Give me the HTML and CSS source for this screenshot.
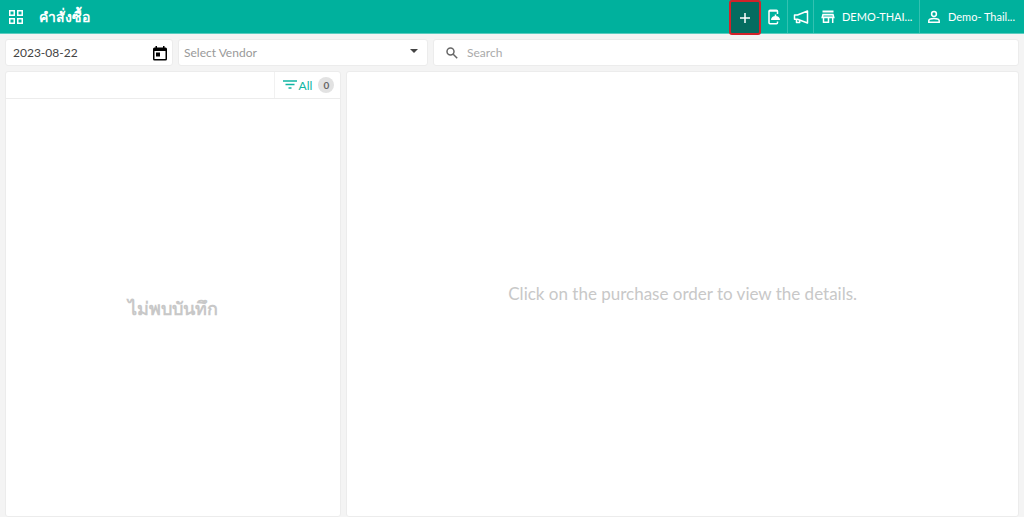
FILE: index.html
```
<!DOCTYPE html>
<html lang="th">
<head>
<meta charset="utf-8">
<meta name="viewport" content="width=device-width, initial-scale=1">
<title>คำสั่งซื้อ</title>
<link rel="stylesheet" href="styles.css">
</head>
<body>
  <header class="topbar">
    <button class="menubtn" type="button" aria-label="Menu">
      <svg width="16" height="16" viewBox="0 0 16 16" fill="none" stroke="currentColor" stroke-width="1.5">
        <path d="M1.75 1.75h4.5v4.5h-4.5zM9.75 1.75h4.5v4.5h-4.5zM1.75 9.75h4.5v4.5h-4.5zM9.75 9.75h4.5v4.5h-4.5z"/>
      </svg>
    </button>
    <h1 class="title">คำสั่งซื้อ</h1>
    <nav class="actions">
      <button class="action add" type="button" aria-label="Add order">
        <svg width="12" height="12" viewBox="0 0 12 12" stroke="currentColor" stroke-width="1.5"><path d="M6 1v10M1 6h10"/></svg>
      </button>
      <button class="action icon" type="button" aria-label="Mobile orders">
        <svg width="14" height="16" viewBox="0 0 14 16" fill="none" stroke="currentColor" stroke-width="1.5">
          <path d="M10.5 5V2.2q0-1-1-1H3q-1 0-1 1v11.6q0 1 1 1h6.5q1 0 1-1V12.500"/>
          <path d="M2 2h8.5"/>
          <path d="M4 11c0-2.500 2-4 4.500-4s4.500 1.500 4.500 4z" fill="currentColor" stroke="none"/>
          <path d="M8.5 5.500v2"/>
        </svg>
      </button>
      <button class="action icon" type="button" aria-label="Announcements">
        <svg width="16" height="16" viewBox="0 0 16 16" fill="none" stroke="currentColor" stroke-width="1.5" stroke-linejoin="round">
          <path d="M1.5 6v4.200h3L14.500 14V2L4.500 6z"/>
          <path d="M3.500 10.500v3h3.200v-2.200"/>
        </svg>
      </button>
      <button class="action store" type="button">
        <svg width="14" height="14" viewBox="0 0 14 14" fill="none" stroke="currentColor" stroke-width="1.5">
          <path d="M1.500 1.500h11" stroke-width="2"/>
          <path d="M2 4.500h10l.8 3H1.200z" fill="currentColor" fill-opacity=".4"/>
          <path d="M2.500 7.500v4.700h5V7.500M11.700 7.500V13"/>
        </svg>
        <span>DEMO-THAI...</span>
      </button>
      <button class="action user" type="button">
        <svg width="14" height="14" viewBox="0 0 14 14" fill="none" stroke="currentColor" stroke-width="1.5">
          <circle cx="7" cy="4" r="2.4"/>
          <path d="M1.800 12.200v-1.400c0-1.500 3-2.300 5.200-2.300s5.200.8 5.200 2.300v1.400z"/>
        </svg>
        <span>Demo- Thail...</span>
      </button>
    </nav>
  </header>

  <main class="page">
    <form class="filters">
      <div class="field date">
        <input type="text" value="2023-08-22" aria-label="Date">
        <button class="calendar" type="button" aria-label="Open calendar">
          <svg width="14" height="16" viewBox="0 0 14 16" fill="currentColor">
            <path fill-rule="evenodd" d="M2.500 1H4v1.500h6V1h1.500v1.500h1A1.500 1.500 0 0 1 14 4v10a1.500 1.500 0 0 1-1.500 1.500h-11A1.500 1.500 0 0 1 0 14V4a1.500 1.500 0 0 1 1.500-1.500h1zM1.500 6v8h11V6z"/>
            <path d="M3 7.500h4v4H3z"/>
          </svg>
        </button>
      </div>
      <div class="field vendor">
        <select aria-label="Vendor">
          <option>Select Vendor</option>
        </select>
        <svg class="arrow" width="8" height="8" viewBox="0 0 8 8" fill="currentColor"><path d="M0 0h8L4 4z"/></svg>
      </div>
      <div class="field search">
        <svg width="12" height="12" viewBox="0 0 12 12" fill="none" stroke="currentColor" stroke-width="1.5">
          <circle cx="4.5" cy="4.5" r="3.5"/><path d="M7.200 7.200l4 4"/>
        </svg>
        <input type="text" placeholder="Search" aria-label="Search">
      </div>
    </form>

    <div class="panels">
      <section class="panel orders">
        <div class="toolbar">
          <button class="filter" type="button">
            <svg width="14" height="11" viewBox="0 0 14 11" stroke="currentColor" stroke-width="1.6"><path d="M0 1h14M2.500 4.500h9M5.500 8h3"/></svg>
            <span>All</span>
            <span class="count">0</span>
          </button>
        </div>
        <p class="empty thai">ไม่พบบันทึก</p>
      </section>
      <section class="panel details">
        <p class="empty">Click on the purchase order to view the details.</p>
      </section>
    </div>
  </main>
</body>
</html>
```
FILE: styles.css
```
* {
  box-sizing: border-box;
}

body {
  display: flex;
  flex-direction: column;
  min-height: 100vh;
  margin: 0;
  background: #f4f4f4;
  color: #444;
  font-family: Lato, "Noto Sans", sans-serif;
  font-size: 12px;
}

button, input, select {
  margin: 0;
  padding: 0;
  border: none;
  background: none;
  color: inherit;
  font: inherit;
}

button {
  cursor: pointer;
}

svg {
  display: block;
  flex: none;
}

/* Top bar */
.topbar {
  display: flex;
  align-items: center;
  height: 34px;
  padding-left: 8px;
  background: #00b19d;
  border-bottom: 1px solid #5accbf;
  color: white;
}

.title {
  margin: 0 0 0 15px;
  font-size: 14px;
  font-weight: bold;
  line-height: 20px;
}

.actions {
  display: flex;
  align-self: stretch;
  margin-left: auto;
}

.action {
  display: flex;
  align-items: center;
  gap: 7px;
  padding: 0 7px;
  border-left: 1px solid #33c1b1;
  font-size: 11px;
  white-space: nowrap;
}

.action.add {
  justify-content: center;
  width: 32px;
  height: 35px;
  border: 2px solid #d3222a;
  border-radius: 3px;
  background: #046c60;
}

.action.icon {
  justify-content: center;
  width: 26px;
  padding: 0;
}

.add + .icon {
  border-left: none;
}

.action.store {
  width: 106px;
}

.action.user {
  width: 105px;
}

/* Filters */
.page {
  display: flex;
  flex: 1;
  flex-direction: column;
  gap: 5px;
  padding: 5px 5px 0;
}

.filters {
  display: flex;
  gap: 5px;
}

.field {
  display: flex;
  align-items: center;
  min-width: 0;
  height: 27px;
  border: 1px solid #ececec;
  border-radius: 3px;
  background: white;
}

.field input, .field select {
  flex: 1;
  min-width: 0;
  height: 100%;
  outline: none;
}

.date {
  flex: 0 1 168px;
  padding: 0 5px 0 7px;
}

.calendar {
  color: black;
}

.vendor {
  position: relative;
  flex: 0 1 250px;
  color: #999;
}

.vendor select {
  padding: 0 20px 0 5px;
  appearance: none;
}

.arrow {
  position: absolute;
  right: 9px;
  color: #444;
  pointer-events: none;
}

.search {
  flex: 1;
  gap: 9px;
  padding: 0 12px;
  color: #666;
}

.search input::placeholder {
  color: #aaa;
}

/* Order list and details */
.panels {
  display: grid;
  flex: 1;
  grid-template-columns: 1fr 2fr;
  gap: 5px;
}

.panel {
  display: flex;
  flex-direction: column;
  border: 1px solid #ececec;
  border-radius: 3px;
  background: white;
}

.toolbar {
  display: flex;
  justify-content: flex-end;
  height: 27px;
  border-bottom: 1px solid #ececec;
}

.filter {
  display: flex;
  align-items: center;
  gap: 2px;
  padding: 0 6px 0 8px;
  border-left: 1px solid #f1f1f1;
  color: #10b5a2;
}

.count {
  width: 16px;
  height: 16px;
  margin-left: 4px;
  border-radius: 50%;
  background: #e2e2e2;
  color: #666;
  font-size: 10px;
  font-weight: bold;
  line-height: 16px;
}

.empty {
  margin: auto;
  color: #c8c8c8;
  font-size: 17px;
  line-height: 24px;
}

.thai {
  font-size: 18px;
  font-weight: bold;
}
```
